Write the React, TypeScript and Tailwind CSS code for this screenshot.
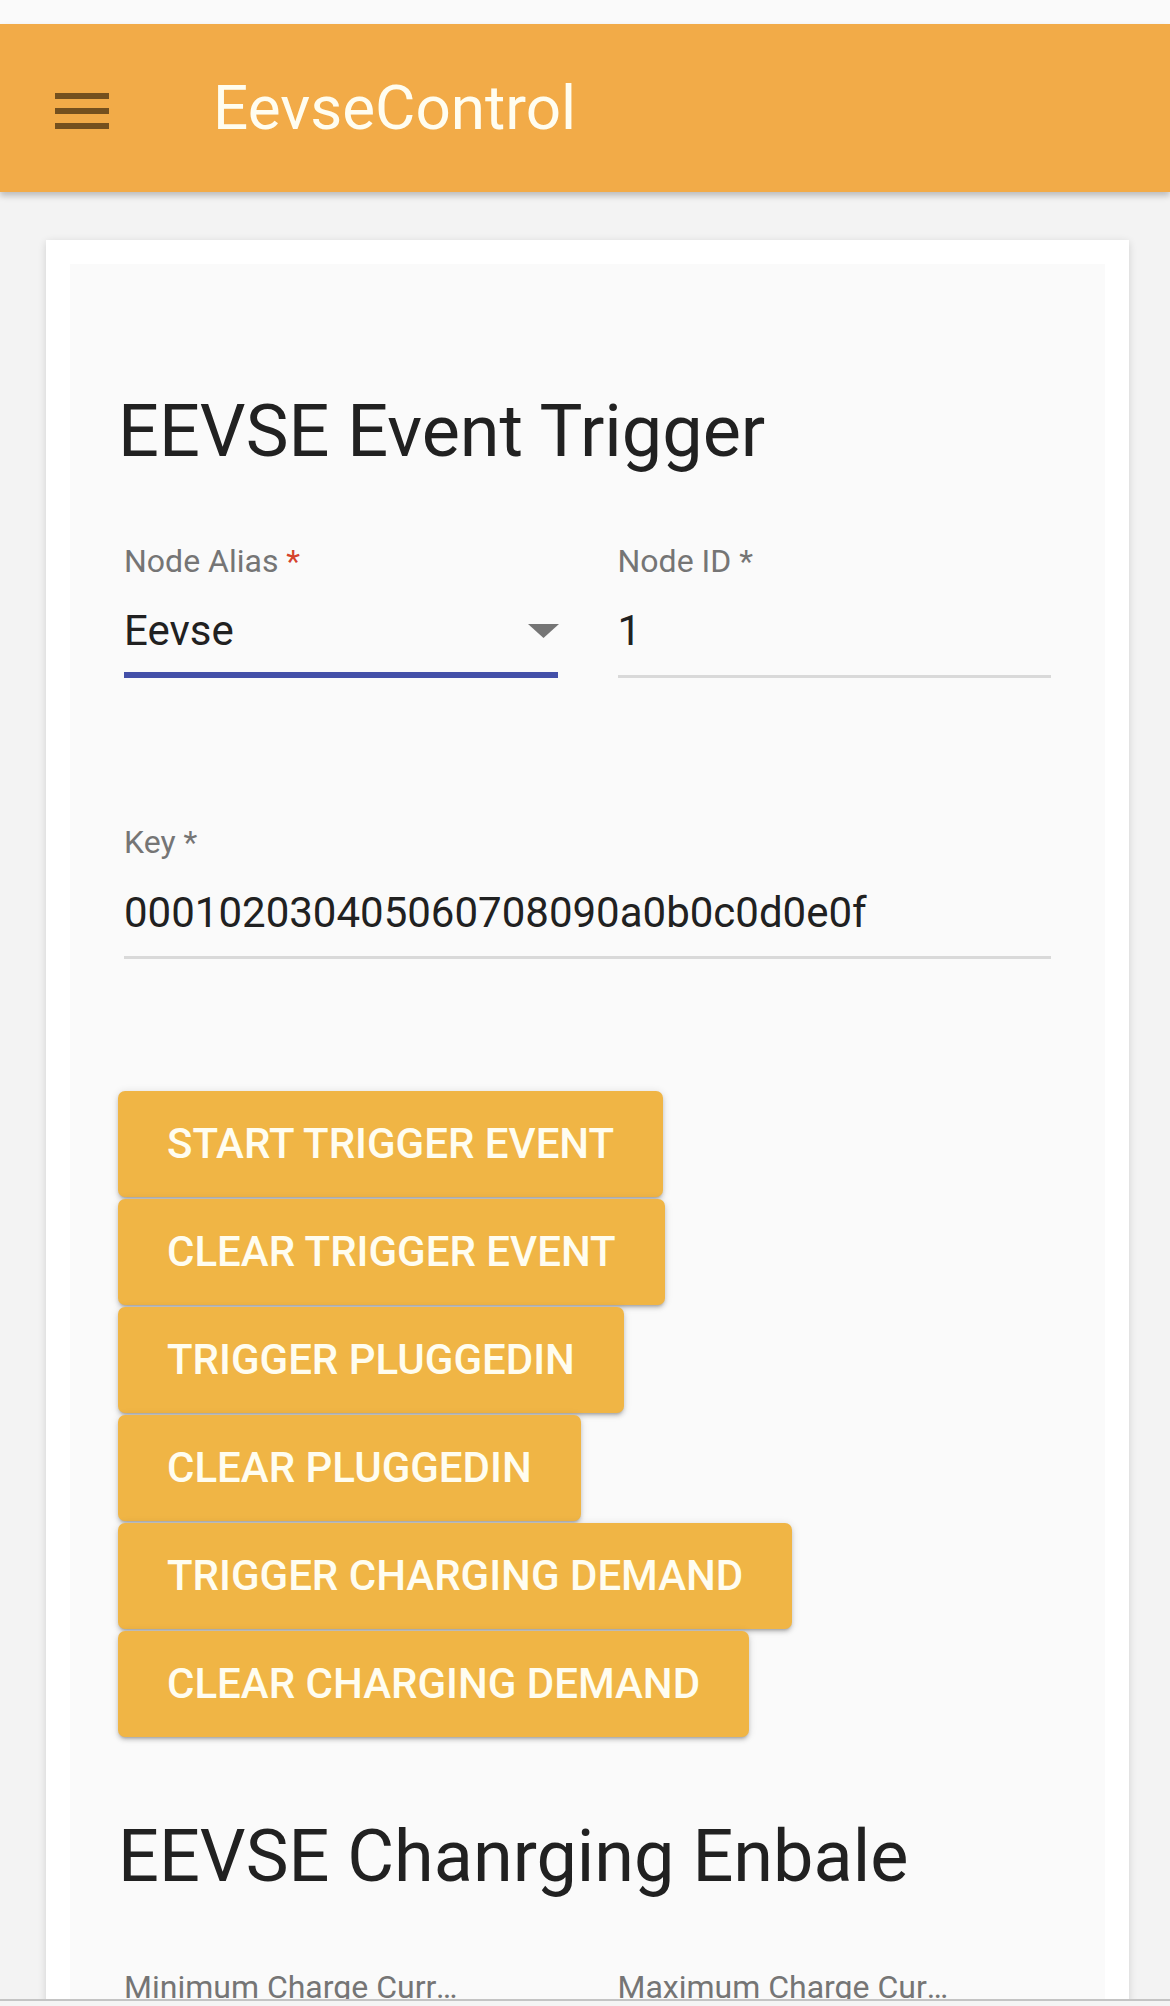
import React from 'react';

const BUTTONS = [
  'START TRIGGER EVENT',
  'CLEAR TRIGGER EVENT',
  'TRIGGER PLUGGEDIN',
  'CLEAR PLUGGEDIN',
  'TRIGGER CHARGING DEMAND',
  'CLEAR CHARGING DEMAND',
];

interface FieldProps {
  label: string;
  value?: string;
  redStar?: boolean;
  focused?: boolean;
  select?: boolean;
  truncate?: boolean;
}

const Field: React.FC<FieldProps> = ({ label, value, redStar, focused, select, truncate }) => {
  return (
    <div className="flex flex-col">
      <label
        className={
          truncate
            ? 'block max-w-[336px] truncate text-[32px] leading-[40px] text-[#757575]'
            : 'block text-[32px] leading-[40px] text-[#757575]'
        }
      >
        {label} <span className={redStar ? 'text-[#d5432c]' : ''}>*</span>
      </label>
      {value !== undefined && (
        <div
          className={
            focused
              ? 'mt-[25px] flex items-center justify-between border-b-[6px] border-[#4350a8] pb-[16px]'
              : 'mt-[25px] flex items-center justify-between border-b-[3px] border-[#d9d9d9] pb-[19px]'
          }
        >
          <span className="text-[42px] leading-[50px] text-[#212121]">{value}</span>
          {select && (
            <svg width="31" height="14" viewBox="0 0 31 14" className="mr-[-1px]">
              <path d="M0 0 L31 0 L15.5 14 Z" fill="#757575" />
            </svg>
          )}
        </div>
      )}
    </div>
  );
};

export default function App() {
  return (
    <div
      className="relative h-[2006px] overflow-hidden bg-[#f3f3f3]"
      style={{ fontFamily: 'Roboto, "Noto Sans", sans-serif' }}
    >
      <div className="h-[24px] bg-[#fafafa]" />

      {/* Toolbar */}
      <header className="relative z-10 flex h-[168px] items-center bg-[#f2ab48] pl-[55px] shadow-[0_4px_6px_rgba(0,0,0,0.22)]">
        <div className="mt-[5px] flex w-[54px] flex-col gap-[9px]">
          <div className="h-[6px] bg-[#74501e]" />
          <div className="h-[6px] bg-[#74501e]" />
          <div className="h-[6px] bg-[#74501e]" />
        </div>
        <h1 className="ml-[104px] text-[62px] font-normal leading-[168px] text-[#fffdf0]">
          EevseControl
        </h1>
      </header>

      <main className="pt-[48px] pl-[46px] pr-[41px]">
        <div className="bg-white p-[24px] shadow-[0_2px_8px_rgba(0,0,0,0.14)]">
          <div className="bg-[#fafafa] pt-[125px] pb-[60px] pl-[48px] pr-[54px]">
            <h2 className="text-[72px] font-normal leading-[86px] text-[#212121]">
              EEVSE Event Trigger
            </h2>

            <div className="pl-[6px]">
              <div className="mt-[66px] grid grid-cols-2 gap-x-[60px]">
                <Field label="Node Alias" value="Eevse" redStar focused select />
                <Field label="Node ID" value="1" />
              </div>

              <div className="mt-[144px] flex flex-col">
                <label className="block text-[32px] leading-[40px] text-[#757575]">Key *</label>
                <div className="mt-[26px] border-b-[3px] border-[#d9d9d9] pb-[18px]">
                  <span className="text-[42px] leading-[50px] text-[#212121]">
                    000102030405060708090a0b0c0d0e0f
                  </span>
                </div>
              </div>
            </div>

            {/* Buttons */}
            <div className="mt-[132px] flex flex-col items-start gap-[2px]">
              {BUTTONS.map((b) => (
                <button
                  key={b}
                  type="button"
                  className="flex h-[106px] items-center rounded-[7px] bg-[#f0b545] px-[49px] text-[42px] font-medium leading-[50px] text-[#fffdf0] shadow-[0_3px_3px_-2px_rgba(0,0,0,0.2),0_3px_4px_0_rgba(0,0,0,0.14),0_1px_8px_0_rgba(0,0,0,0.12)]"
                >
                  {b}
                </button>
              ))}
            </div>

            <h2 className="mt-[77px] text-[72px] font-normal leading-[86px] text-[#212121]">
              EEVSE Chanrging Enbale
            </h2>

            <div className="mt-[67px] grid grid-cols-2 gap-x-[60px] pl-[6px]">
              <Field label="Minimum Charge Current (A)" truncate value="6" />
              <Field label="Maximum Charge Current (A)" truncate value="16" />
            </div>
          </div>
        </div>
      </main>

      {/* bottom browser strip */}
      <div className="absolute bottom-0 left-0 right-0 h-[7px] border-t-2 border-[#c4c4c4] bg-[#f4f4f4]" />
    </div>
  );
}
